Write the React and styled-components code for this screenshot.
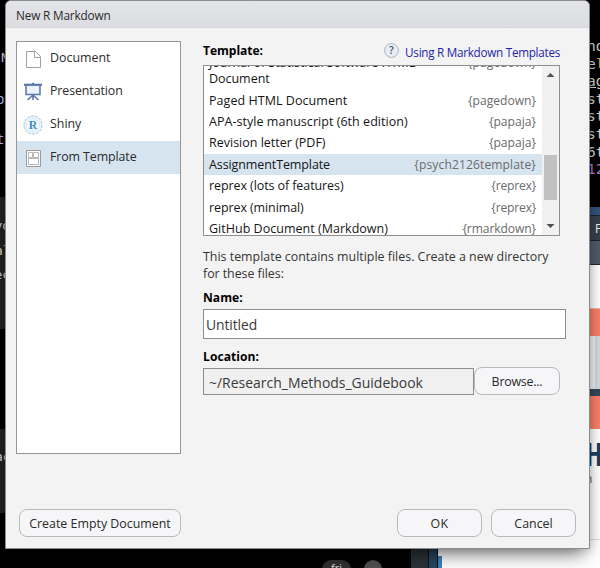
import React from 'react';
import styled, { createGlobalStyle } from 'styled-components';

const GlobalStyle = createGlobalStyle`
  * { box-sizing: border-box; }
  body { margin: 0; background: #000; }
`;

const Desktop = styled.main`
  display: grid;
  grid-template: 568px / 600px;
  overflow: hidden;
  font-family: 'Open Sans', 'Noto Sans', sans-serif;
  font-size: 12.4px;
  color: #2a2a2a;
  > * { grid-area: 1 / 1; }
`;

/* Windows behind the dialog */
const Backdrop = styled.div`
  display: grid;
  grid-template-columns: 411px 18px 9px 162px;
  height: 568px;
  background: #000;
  overflow: hidden;
`;
const Editor = styled.div`
  display: flex;
  flex-direction: column;
  overflow: hidden;
  background: #000;
`;
const EditorBlock = styled.div`
  flex: none;
  height: ${p => p.$h}px;
  padding-top: ${p => p.$top || 0}px;
  background: ${p => p.$bg || '#000'};
  overflow: hidden;
`;
const CodeLine = styled.div`
  height: ${p => p.$h}px;
  line-height: ${p => p.$h}px;
  margin-left: ${p => p.$x || 0}px;
  font-family: 'DejaVu Sans Mono', monospace;
  font-size: ${p => p.$size || 13}px;
  color: ${p => p.$color || '#c8c8c8'};
  white-space: pre;
`;
const Chips = styled.div`
  display: flex;
  gap: 13px;
  margin-top: auto;
  height: 8px;
  padding-left: 322px;
  overflow: hidden;
`;
const Chip = styled.div`
  flex: none;
  width: ${p => p.$w}px;
  height: 18px;
  border-radius: 9px;
  background: ${p => p.$bg};
  color: #ddd;
  font-size: 11px;
  line-height: 15px;
  text-align: center;
`;
const Gutter = styled.div`
  background: ${p => p.$bg};
  border-right: 1px solid #0b1116;
`;
const Browser = styled.div`
  display: flex;
  flex-direction: column;
  background: #fff;
  overflow: hidden;
`;
const Band = styled.div`
  flex: none;
  height: ${p => p.$h}px;
  background: ${p => p.$bg};
  border-bottom: ${p => p.$line ? `1px solid ${p.$line}` : 'none'};
`;
const Terminal = styled(Band)`
  padding: 38px 0 0 149px;
`;
const TerminalLine = styled.div`
  height: 17.6px;
  line-height: 17.6px;
  font-family: 'DejaVu Sans Mono', monospace;
  font-size: 14.5px;
  color: #d2d5d2;
  white-space: pre;
  text-decoration: ${p => p.$under ? 'underline' : 'none'};
`;
const Tint = styled.span`
  color: ${p => p.$c};
`;
const TabBand = styled(Band)`
  padding-left: 157px;
  color: #eee;
  font-size: 12px;
  line-height: 25px;
`;
const Tile = styled(Band)`
  padding-left: 157px;
  display: flex;
  &::after {
    content: '';
    flex: 1;
    background: #d3d9de;
  }
`;
const Headline = styled(Band)`
  padding-left: 147px;
  color: #173f66;
  font: bold 32px/30px 'Liberation Sans Narrow', 'Open Sans Condensed', 'DejaVu Sans Condensed', sans-serif;
  white-space: nowrap;
`;
const Subline = styled(Band)`
  padding-left: 147px;
  color: #555;
  font-size: 12px;
  line-height: 18px;
`;
const Sliver = styled.div`
  width: 4px;
  height: 12px;
  margin-top: auto;
  background: #3d82b8;
`;

/* Dialog */
const Dialog = styled.section`
  display: flex;
  flex-direction: column;
  width: 585px;
  height: 549px;
  margin-left: 5px;
  background: #f3f3f3;
  border: 1px solid #8c8c8c;
  border-radius: 6px 6px 0 0;
  box-shadow: 2px 12px 18px -8px rgba(0, 0, 0, 0.6), 1px 1px 8px rgba(0, 0, 0, 0.12);
  z-index: 1;
`;
const TitleBar = styled.header`
  height: 27px;
  padding-left: 10px;
  background: linear-gradient(#e3e4e7, #dcdde1);
  border-bottom: 1px solid #d5d6da;
  border-radius: 5px 5px 0 0;
  font-size: 11.8px;
  line-height: 29px;
`;
const Text = styled.span`
  letter-spacing: ${p => p.$track || 0}px;
  white-space: nowrap;
`;
const Body = styled.div`
  display: flex;
  padding: 13px 0 0 10px;
`;
const Sidebar = styled.nav`
  width: 165px;
  height: 413px;
  background: #fff;
  border: 1px solid #969696;
`;
const SideItem = styled.div`
  display: flex;
  align-items: center;
  gap: 7px;
  height: 33px;
  padding: 0 0 0 6px;
  line-height: 16px;
  background: ${p => p.$active ? '#d6e4f0' : 'transparent'};
  svg { flex: none; width: 20px; height: 20px; }
  span { padding-bottom: 2px; }
`;
const Main = styled.div`
  display: flex;
  flex-direction: column;
  width: 363px;
  margin-left: 22px;
`;
const TemplateHead = styled.div`
  display: flex;
  justify-content: space-between;
  width: 357px;
  height: 24px;
`;
const Label = styled.div`
  font-size: 12.1px;
  font-weight: 700;
  line-height: 19px;
  height: 18px;
  color: #000;
  letter-spacing: ${p => p.$track || 0}px;
`;
const HelpLink = styled.a`
  display: flex;
  gap: 6px;
  padding-top: 2px;
  color: #1f1fa8;
  font-size: 11.7px;
  line-height: 19px;
  svg { width: 15px; height: 15px; }
`;
const ListBox = styled.div`
  display: flex;
  width: 357px;
  height: 171px;
  background: #fff;
  border: 1px solid #8e8e8e;
  overflow: hidden;
`;
const Rows = styled.div`
  flex: 1;
  margin-top: -14.5px;
`;
const Row = styled.div`
  display: flex;
  justify-content: space-between;
  height: ${p => p.$tall ? 38.3 : 21.35}px;
  padding: ${p => p.$tall ? 3 : 0}px 6px 0 5px;
  font-size: 12.5px;
  line-height: ${p => p.$tall ? 16.5 : 21.8}px;
  background: ${p => p.$active ? '#d6e4f0' : 'transparent'};
  color: #161616;
`;
const Package = styled(Text)`
  font-size: 12.1px;
  color: #6b6b6b;
`;
const ScrollBar = styled.div`
  display: flex;
  flex-direction: column;
  align-items: center;
  width: 17px;
  background: #f1f1f1;
  svg { flex: none; width: 17px; height: 17px; }
`;
const Thumb = styled.div`
  width: 13px;
  height: 45px;
  margin: 72px 0 auto;
  background: #c1c1c1;
`;
const Note = styled.p`
  display: flex;
  flex-direction: column;
  height: 52px;
  margin: 0;
  padding-top: 12px;
  line-height: 17px;
  color: #333;
`;
const NameField = styled.div`
  width: 363px;
  height: 30px;
  margin: 3px 0 8px;
  padding-left: 2px;
  border: 1px solid #8e8e8e;
  background: #fff;
  font-size: 13.9px;
  line-height: 30px;
  color: #3a3a3a;
`;
const LocationRow = styled.div`
  display: flex;
  align-items: flex-end;
  height: 30px;
`;
const PathField = styled.div`
  width: 271px;
  height: 27px;
  padding-left: 5px;
  border: 1px solid #8e8e8e;
  background: #f0f0f0;
  font-size: 13.97px;
  line-height: 28px;
  color: #3a3a3a;
`;
const Button = styled.button`
  width: ${p => p.$w}px;
  height: 28px;
  padding: 1px 0 0;
  border: 1px solid #b9b9bb;
  border-radius: 8px;
  background: #f6f6f8;
  color: #2a2a2a;
  font: 12.4px 'Open Sans', sans-serif;
`;
const Footer = styled.footer`
  display: flex;
  gap: 9px;
  margin: auto 0 11px 13px;
  > :first-child { margin-right: 207px; }
`;

const DocumentIcon = () => (
  <svg viewBox="0 0 20 20" fill="#fff" stroke="#a0a0a0">
    <path d="M3.5 2.5h9l5 5v11h-14z" />
    <path d="M11.5 2.5v6h6" />
  </svg>
);
const PresentationIcon = () => (
  <svg viewBox="0 0 20 20" fill="none" stroke="#5b76a8">
    <path d="M1 2.8h18" strokeWidth="2.2" />
    <path d="M9 1.3h2" strokeWidth="1.2" />
    <path d="M3 4v8.5h14V4" strokeWidth="1.5" fill="#eef2fa" />
    <path d="M10 12v6M9.5 13.5l-5 4.5M10.5 13.5l5 4.5" strokeWidth="1.6" />
  </svg>
);
const ShinyIcon = () => (
  <svg viewBox="0 0 20 20">
    <circle cx="10" cy="10" r="9" fill="#f2f9fc" stroke="#9cc3de" strokeDasharray="3 1" />
    <circle cx="10" cy="10" r="6.8" fill="none" stroke="#cfe4f1" strokeWidth=".8" />
    <text x="10" y="14.2" textAnchor="middle" fontFamily="Liberation Serif, serif" fontWeight="bold" fontSize="11.5" fill="#3d8ec2">R</text>
  </svg>
);
const TemplateIcon = () => (
  <svg viewBox="0 0 20 20" fill="#fff" stroke="#9a9a9a">
    <path d="M3.5 2.5h14v16h-14z" />
    <path d="M5.5 4.5h4v5h-4zM10.5 4.5h5v5h-5zM5.5 10.5h10v6h-10z" strokeWidth=".7" />
  </svg>
);
const HelpIcon = () => (
  <svg viewBox="0 0 15 15">
    <circle cx="7.5" cy="7.5" r="6.9" fill="#e9eef4" stroke="#a9b4c1" />
    <text x="7.5" y="11.3" textAnchor="middle" fontFamily="Open Sans, sans-serif" fontWeight="600" fontSize="10.5" fill="#465a70">?</text>
  </svg>
);
const Arrow = ({ down }) => (
  <svg viewBox="0 0 17 17" fill="#505050">
    <path d={down ? 'M4.5 6h8l-4 4z' : 'M4.5 11h8l-4-4z'} />
  </svg>
);

const sideItems = [
  { name: 'Document', Icon: DocumentIcon },
  { name: 'Presentation', Icon: PresentationIcon, track: -0.1 },
  { name: 'Shiny', Icon: ShinyIcon },
  { name: 'From Template', Icon: TemplateIcon, track: -0.1, active: true },
];

const templates = [
  { name: ['Journal of Statistical Software HTML', 'Document'], pkg: '{pagedown}', tall: true, track: -0.03 },
  { name: ['Paged HTML Document'], pkg: '{pagedown}', track: 0.05 },
  { name: ['APA-style manuscript (6th edition)'], pkg: '{papaja}', track: 0.04 },
  { name: ['Revision letter (PDF)'], pkg: '{papaja}' },
  { name: ['AssignmentTemplate'], pkg: '{psych2126template}', track: -0.1, pkgTrack: 0.1, active: true },
  { name: ['reprex (lots of features)'], pkg: '{reprex}', track: -0.09, pkgTrack: -0.2 },
  { name: ['reprex (minimal)'], pkg: '{reprex}', track: -0.1, pkgTrack: -0.2 },
  { name: ['GitHub Document (Markdown)'], pkg: '{rmarkdown}', track: 0.02, pkgTrack: -0.1 },
];

export default function App() {
  return (
    <>
      <GlobalStyle />
      <Desktop>
        <Backdrop>
          <Editor>
            <EditorBlock $h={197} $top={49}>
              <CodeLine $h={18} $x={1}>N</CodeLine>
              <CodeLine $h={24} />
              <CodeLine $h={16} $x={-4} $size={14} $color="#a9b6ee">p</CodeLine>
              <CodeLine $h={23} />
              <CodeLine $h={18} $x={-4} $size={14} $color="#a9b6ee">t'</CodeLine>
            </EditorBlock>
            <EditorBlock $h={132} $top={17} $bg="#202020">
              <CodeLine $h={24.5} $x={-5.5}>yo</CodeLine>
              <CodeLine $h={24.5} $x={-5}>a<Tint $c="#c99b6b">l</Tint></CodeLine>
              <CodeLine $h={24.5} $x={-5.5}>ec</CodeLine>
            </EditorBlock>
            <EditorBlock $h={100} />
            <EditorBlock $h={84} $top={19} $bg="#202020">
              <CodeLine $h={18} $x={-5}>ac</CodeLine>
            </EditorBlock>
            <Chips>
              <Chip $w={29} $bg="#303030">fri</Chip>
              <Chip $w={18} $bg="#505050" />
            </Chips>
          </Editor>
          <Gutter $bg="#2b3338" />
          <Gutter $bg="#264660" />
          <Browser>
            <Terminal $h={207} $bg="#000">
              <TerminalLine>nd</TerminalLine>
              <TerminalLine>e<Tint $c="#d2a13b">l</Tint></TerminalLine>
              <TerminalLine $under>ag</TerminalLine>
              <TerminalLine>st</TerminalLine>
              <TerminalLine>st</TerminalLine>
              <TerminalLine>st</TerminalLine>
              <TerminalLine>6t</TerminalLine>
              <TerminalLine><Tint $c="#b07ad0">12</Tint></TerminalLine>
            </Terminal>
            <Band $h={9} $bg="#34527a" $line="#1c2633" />
            <TabBand $h={25} $bg="#38414b" $line="#1b222a">F</TabBand>
            <Band $h={24} $bg="#505c68" $line="#20272e" />
            <Band $h={43} $bg="#fff" />
            <Band $h={1} $bg="#f7b3a4" />
            <Band $h={27} $bg="#fa7f69" />
            <Tile $h={53} $bg="#f1f2f3" />
            <Band $h={7} $bg="#34495f" />
            <Band $h={33} $bg="#fa7f69" />
            <Band $h={10} $bg="#fff" />
            <Headline $h={31} $bg="#fff">H</Headline>
            <Subline $h={70} $bg="#fff" $line="#ddd">n</Subline>
            <Sliver />
          </Browser>
        </Backdrop>

        <Dialog>
          <TitleBar><Text $track={-0.17}>New R Markdown</Text></TitleBar>
          <Body>
            <Sidebar>
              {sideItems.map(({ name, Icon, track, active }) => (
                <SideItem key={name} $active={active}>
                  <Icon />
                  <Text $track={track}>{name}</Text>
                </SideItem>
              ))}
            </Sidebar>
            <Main>
              <TemplateHead>
                <Label $track={-0.06}>Template:</Label>
                <HelpLink><HelpIcon /><Text $track={-0.27}>Using R Markdown Templates</Text></HelpLink>
              </TemplateHead>
              <ListBox>
                <Rows>
                  {templates.map((t, i) => (
                    <Row key={i} $tall={t.tall} $active={t.active}>
                      <Text $track={t.track}>{t.name[0]}{t.name[1] && <><br />{t.name[1]}</>}</Text>
                      <Package $track={t.pkgTrack}>{t.pkg}</Package>
                    </Row>
                  ))}
                </Rows>
                <ScrollBar><Arrow /><Thumb /><Arrow down /></ScrollBar>
              </ListBox>
              <Note>
                <Text $track={0.01}>This template contains multiple files. Create a new directory</Text>
                <Text $track={-0.04}>for these files:</Text>
              </Note>
              <Label>Name:</Label>
              <NameField><Text $track={-0.1}>Untitled</Text></NameField>
              <Label $track={0.05}>Location:</Label>
              <LocationRow>
                <PathField><Text>~/Research_Methods_Guidebook</Text></PathField>
                <Button $w={86}><Text $track={-0.22}>Browse...</Text></Button>
              </LocationRow>
            </Main>
          </Body>
          <Footer>
            <Button $w={162}><Text>Create Empty Document</Text></Button>
            <Button $w={85}><Text $track={0.4}>OK</Text></Button>
            <Button $w={85}><Text>Cancel</Text></Button>
          </Footer>
        </Dialog>
      </Desktop>
    </>
  );
}
